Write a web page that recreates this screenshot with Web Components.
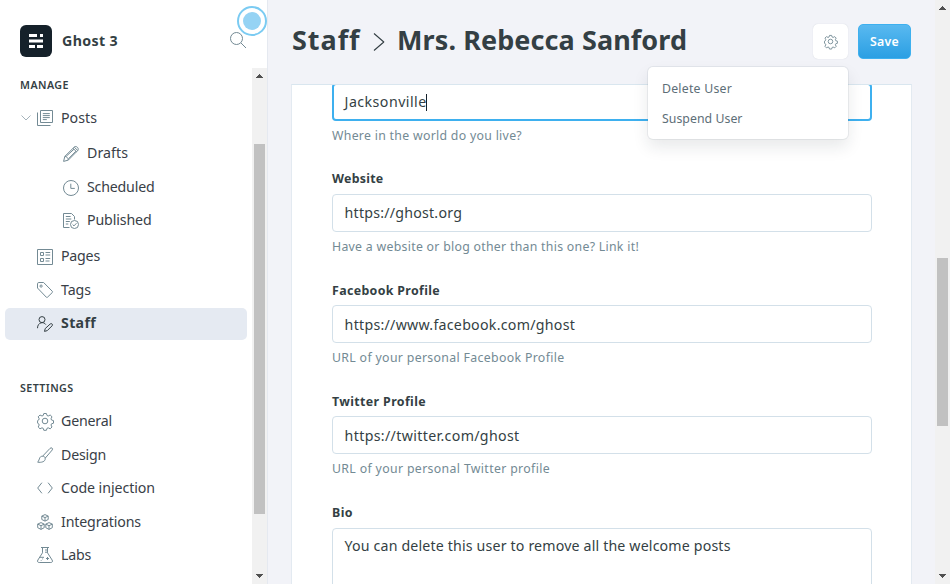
<!DOCTYPE html>
<html lang="en">
<head>
<meta charset="utf-8">
<title>Ghost 3 - Staff</title>
<style>
html,body{margin:0;height:100%;overflow:hidden}
body{font-family:"Noto Sans","Open Sans",sans-serif;color:#343f44;background:#f2f3f8}
</style>
</head>
<body>
<ghost-app></ghost-app>
<script>
const ICONS = {
  posts:'<path d="M3.5.5h12v12h-12zM.5 2.5v13h13M5.8 3.6h7M5.8 5.6h7M5.8 7.6h7M5.8 9.6h4"/>',
  drafts:'<path d="M.6 15.4l1.2-5L11.3 1c2-1.6 5 1.2 3.6 3.4l-9.6 9.7zM1.8 10.4c2 .2 3.3 1.4 3.5 3.7M10 2.3l3.7 3.6M11.2 1.1l3.7 3.6M3.3 10.2l7.7-7M5.5 12.7l7.4-7.5"/>',
  scheduled:'<circle cx="8" cy="8" r="7.5"/><path d="M7.8 3.7v4.7h4"/>',
  published:'<path d="M6.5 14.5h-6V.5h8l3 3v3M2.8 3.5h4.8M2.8 6h5.5M2.8 8.5h4M2.8 11h2.5"/><circle cx="11.5" cy="11.5" r="4"/><path d="M9.6 11.5l1.4 1.4 2.5-2.7"/>',
  pages:'<path d="M.5.5h15v15H.5zM3.5 3.5h3v3h-3zM3.5 9.5h3v3h-3zM8.5 3.5h4.7M8.5 6h4.7M8.5 9.5h4.7M8.5 12h4"/>',
  tags:'<path d="M.5 1.8V6l8.8 9.2c.4.4.8.4 1.2 0l4.8-4.7c.4-.4.4-.8 0-1.2L6.6.5H1.8C1 .5.5 1 .5 1.8z"/><circle cx="4.1" cy="4.1" r="1.1"/>',
  staff:'<circle cx="5" cy="3.6" r="3"/><path d="M.5 12.2c0-6 6.3-7 8.3-3.6M7.5 15.4l.7-2.8 5-4.6c1.4-1.2 3 .5 1.9 1.8l-4.8 4.8z"/>',
  gear:'<circle cx="8" cy="8" r="2.8"/><path d="M6.7.6h2.6l.6 2 1.2.5 2-1 1.8 1.8-1 2 .5 1.2 2 .6v2.6l-2 .6-.5 1.2 1 2-1.8 1.8-2-1-1.2.5-.6 2H6.7l-.6-2-1.2-.5-2 1-1.8-1.8 1-2-.5-1.2-1.1-.6V7.7l1.1-.6.5-1.2-1-2 1.8-1.8 2 1 1.2-.5z" transform="translate(.1 -.1)"/>',
  design:'<path d="M5.5 9.3L13 1.4c1.3-1.3 3.3-.2 2.3 1.5l-7.1 8.3c-.2-1.4-1.2-2.1-2.7-1.9zM5.5 9.3c-3.3-.3-2.6 3.1-4.8 5.9 3.3.5 8-.3 7.5-4"/>',
  code:'<path d="M4.9 2.7L.7 8l4.2 5.3M11.1 2.7L15.3 8l-4.2 5.3"/>',
  integrations:'<path d="M8 .6l3.2 1.5v3.4L8 7.1 4.8 5.5V2.1zM4.8 2.1L8 3.6l3.2-1.5M8 3.6v3.5M4 8.6l3.2 1.5v3.6L4 15.4.7 13.7v-3.6zM.7 10.1L4 11.7l3.2-1.6M4 11.7v3.7M12 8.6l3.3 1.5v3.6L12 15.4l-3.2-1.7v-3.6zM8.8 10.1l3.2 1.6 3.3-1.6M12 11.7v3.7"/>',
  labs:'<path d="M4 .5h8M5.5.5v5.3L.9 13c-1 1.6 0 2.5 1.3 2.5h11.6c1.3 0 2.3-.9 1.3-2.5l-4.6-7.2V.5M8 3h2.5M8 5.2h2.5M2.6 10.3H7M10.5 10v3M9 11.5h3M5.6 11.5v.8M4.2 13v.7"/>',
  search:'<circle cx="6.5" cy="6.5" r="6"/><path d="M11 11l5 5"/>',
  chevron:'<path d="M.5 5.5L5 10l4.5-4.5"/>',
  crumb:'<path d="M1 .5L10.8 9 1 17.5"/>'
};
const fitted = [];
const define = (name, html, init) => customElements.define(name, class extends HTMLElement {
  connectedCallback() {
    if (this.shadowRoot) return;
    const root = this.attachShadow({mode:'open'});
    root.innerHTML = typeof html === 'function' ? html(this) : html;
    if (init) init(this, root);
  }
});

/* A run of text tracked out to a set width. */
define('fit-text', '<style>:host{display:inline-block;white-space:pre;font-kerning:normal}</style><slot></slot>', el => fitted.push(el));

define('ui-icon', el => {
  const w = el.getAttribute('w') || 16, h = el.getAttribute('h') || 16;
  const box = el.getAttribute('box') || '0 0 16 16';
  return `<style>:host{display:block;flex:none;width:${w}px;height:${h}px}svg{display:block;overflow:visible}</style>
  <svg width="${w}" height="${h}" viewBox="${box}" fill="none" stroke="currentColor" stroke-width="${el.getAttribute('stroke')||1}" stroke-linejoin="round">${ICONS[el.getAttribute('name')]}</svg>`;
});

define('nav-item', el => `<style>
  :host{display:flex;align-items:center;box-sizing:border-box;height:32px;margin:0 5px;padding-left:32px;border-radius:5px;font-size:14.2px;line-height:28px;color:#394047}
  :host([sub]){padding-left:58px}
  :host([open]){padding-left:16px}
  :host([active]){background:#e5eaf2;font-weight:700;color:#343f44}
  fit-text{margin-bottom:3px}
  :host([low]) fit-text{margin-bottom:1px}
  ui-icon{color:#738a94;margin-right:8px}
  :host([active]) ui-icon{color:#343f44}
  ui-icon.arrow{color:#a5b3bb;margin-right:6px}
  </style>${el.hasAttribute('open') ? '<ui-icon class="arrow" name="chevron" w="10" box="0 0 10 16"></ui-icon>' : ''}
  <ui-icon name="${el.getAttribute('icon')}"></ui-icon><fit-text w="${el.getAttribute('w')}">${el.getAttribute('label')}</fit-text>`);

define('scroll-bar', el => `<style>
  :host{display:flex;flex-direction:column;align-items:center;justify-content:space-between;flex:none;width:15px;background:#f1f1f1;box-sizing:border-box}
  svg{display:block;flex:none}
  .track{flex:1;padding-top:${el.getAttribute('start')}px}
  .thumb{width:11px;height:${el.getAttribute('size')}px;background:#c1c1c1}
  </style><svg width="15" height="15" shape-rendering="crispEdges"><path d="M7 6h1v1h1v1h1v1h1v1H4V9h1V8h1V7h1z" fill="#505050"/></svg>
  <div class="track"><div class="thumb"></div></div>
  <svg width="15" height="15" shape-rendering="crispEdges"><path d="M4 5h7v1h-1v1H9v1H8v1H7V8H6V7H5V6H4z" fill="#505050"/></svg>`);

define('side-bar', `<style>
  :host{display:flex;flex-direction:column;flex:none;width:268px;height:584px;box-sizing:border-box;background:#fff;border-right:1px solid #e5e9f0;position:relative}
  header{display:flex;align-items:center;height:68px;flex:none;box-sizing:border-box;padding:14px 21px 0 20px}
  .logo{width:32px;height:32px;margin-right:10px}
  .name{font-size:14.2px;font-weight:700;flex:none;margin-bottom:1px}
  .search{margin:0 0 2px auto;color:#738a94}
  .body{display:flex;flex:1;min-height:0}
  nav{flex:1;min-width:0;overflow:hidden}
  h4{font-size:10.7px;font-weight:600;line-height:16px;height:16px;margin:9px 20px 9px}
  .g2{margin-top:40px}
  .beacon{position:absolute;left:237px;top:6px;width:30px;height:30px;box-sizing:border-box;border:2px solid #7bcbf2;border-radius:50%;display:grid;place-items:center}
  .beacon i{width:18px;height:18px;border-radius:50%;background:#95d3f4}
  .m1{margin-top:1px}.m2{margin-top:2px}.m4{margin-top:4px}
  </style>
  <header><svg class="logo" viewBox="0 0 32 32"><rect width="32" height="32" rx="6" fill="#15212a"/><path d="M9 9h8v3H9zM20 9h3v3h-3zM9 14.5h14v3H9zM9 20h6v3H9zM17 20h6v3h-6z" fill="#fff"/></svg>
  <div class="name"><fit-text w="56">Ghost 3</fit-text></div><ui-icon class="search" name="search" w="16" h="16" box="0 0 16 16"></ui-icon></header>
  <div class="body"><nav>
  <h4><fit-text w="49">MANAGE</fit-text></h4>
  <nav-item open low icon="posts" label="Posts" w="36"></nav-item>
  <nav-item sub class="m4" icon="drafts" label="Drafts" w="41"></nav-item>
  <nav-item sub class="m2" icon="scheduled" label="Scheduled" w="67.5"></nav-item>
  <nav-item sub class="m1" icon="published" label="Published" w="64.5"></nav-item>
  <nav-item class="m4" icon="pages" label="Pages" w="39"></nav-item>
  <nav-item low class="m1" icon="tags" label="Tags" w="30"></nav-item>
  <nav-item class="m2" active icon="staff" label="Staff" w="35"></nav-item>
  <h4 class="g2"><fit-text w="53.5">SETTINGS</fit-text></h4>
  <nav-item low icon="gear" label="General" w="51"></nav-item>
  <nav-item low class="m2" icon="design" label="Design" w="45"></nav-item>
  <nav-item low class="m1" icon="code" label="Code injection" w="94"></nav-item>
  <nav-item low class="m2" icon="integrations" label="Integrations" w="80"></nav-item>
  <nav-item low class="m1" icon="labs" label="Labs" w="30"></nav-item>
  </nav><scroll-bar start="61" size="370"></scroll-bar></div>
  <div class="beacon"><i></i></div>`);

define('drop-menu', `<style>
  :host{display:block;position:absolute;right:63px;top:43px;width:200px;height:72px;box-sizing:border-box;padding:7px 14px;background:#fff;border-radius:5px;font-size:12.3px;color:#5d6e77;box-shadow:0 0 0 1px rgba(99,114,130,.10),0 8px 16px rgba(27,39,51,.10);z-index:2}
  div{height:30px;line-height:30px}
  </style><div><fit-text w="70">Delete User</fit-text></div><div><fit-text w="80.5">Suspend User</fit-text></div>`);

define('page-header', `<style>
  :host{display:flex;align-items:flex-start;height:84px;box-sizing:border-box;padding:24px 24px 0;flex:none;position:relative}
  h2{display:flex;align-items:center;margin:-1px 0 0;height:33px;font-size:27px;line-height:33px;font-weight:700;flex:1}
  h2 ui-icon{margin:4px 12.5px 0 12px}
  .actions{display:flex;gap:10px;position:relative}
  .btn{display:grid;place-items:center;height:35px;border-radius:5px;box-sizing:border-box}
  .gear{width:35px;background:#fff;color:#738a94;box-shadow:0 0 1px rgba(80,100,120,.25)}
  .save{width:53px;background:linear-gradient(#59b9f0,#2b9fe3);border:1px solid #3eb0ef;color:#fff;font-size:12.3px;font-weight:600}
  </style><h2><fit-text w="68.5">Staff</fit-text><ui-icon name="crumb" w="12" h="18" box="0 0 12 18" stroke="1.1"></ui-icon><fit-text w="290">Mrs. Rebecca Sanford</fit-text></h2>
  <div class="actions"><div class="btn gear"><ui-icon name="gear" w="13" h="13" stroke="1.1"></ui-icon></div><div class="btn save"><fit-text w="29">Save</fit-text></div><drop-menu></drop-menu></div>`);

define('form-field', el => `<style>
  :host{display:block;margin-bottom:28px}
  label{display:block;height:16px;line-height:16px;font-size:12.4px;font-weight:700;margin-bottom:7px}
  .input{display:flex;align-items:center;box-sizing:border-box;height:38px;border:1px solid #d3e0e9;border-radius:4px;padding:0 11.6px;background:#fff;font-size:14.2px;line-height:24px}
  :host([focused]) .input{border:2px solid #3eb0ef;padding:0 10.6px}
  .caret{width:1px;height:17px;background:#15212a;margin-left:-.6px}
  :host([low]) label{padding-top:1px;margin-bottom:6px}
  :host([low]) .input{padding-top:2px}
  :host([area]) .input{height:110px;align-items:flex-start;padding-top:5px}
  :host([area]){padding-top:1px}
  p{margin:7px 0 0;height:15px;line-height:15px;font-size:12.3px;color:#738a94}
  </style>${el.hasAttribute('label') ? `<label><fit-text w="${el.getAttribute('lw')}">${el.getAttribute('label')}</fit-text></label>` : ''}
  <div class="input"><fit-text w="${el.getAttribute('vw')}">${el.getAttribute('value')}</fit-text>${el.hasAttribute('focused') ? '<span class="caret"></span>' : ''}</div>
  ${el.hasAttribute('help') ? `<p><fit-text w="${el.getAttribute('hw')}">${el.getAttribute('help')}</fit-text></p>` : ''}`);

define('staff-form', `<style>
  :host{display:flex;flex-direction:column;justify-content:flex-start;flex:1;min-height:0;overflow:hidden;box-sizing:border-box;margin:0 23px;padding:0 39px 0 40px;background:#fff;border:1px solid #e3eaf1;border-top-color:#d9e6ef;border-bottom:0}
  form-field{flex:none}
  .first{margin-top:-2px}
  </style>
  <form-field class="first" focused value="Jacksonville" vw="82" help="Where in the world do you live?" hw="190"></form-field>
  <form-field label="Website" lw="51.5" value="https://ghost.org" vw="117.5" help="Have a website or blog other than this one? Link it!" hw="307"></form-field>
  <form-field low label="Facebook Profile" lw="108" value="https://www.facebook.com/ghost" vw="230.5" help="URL of your personal Facebook Profile" hw="232.5"></form-field>
  <form-field low label="Twitter Profile" lw="94" value="https://twitter.com/ghost" vw="175" help="URL of your personal Twitter profile" hw="218"></form-field>
  <form-field area label="Bio" lw="21" value="You can delete this user to remove all the welcome posts" vw="386"></form-field>`);

define('ghost-app', `<style>
  :host{display:flex;width:950px;height:584px;overflow:hidden}
  main{display:flex;flex-direction:column;flex:1;min-width:0}
  </style><side-bar></side-bar><main><page-header></page-header><staff-form></staff-form></main><scroll-bar start="243" size="168"></scroll-bar>`);

for (const el of fitted) {
  const natural = el.getBoundingClientRect().width;
  const n = el.textContent.length;
  el.style.letterSpacing = ((+el.getAttribute('w') - natural) / n).toFixed(3) + 'px';
}
</script>
</body>
</html>
